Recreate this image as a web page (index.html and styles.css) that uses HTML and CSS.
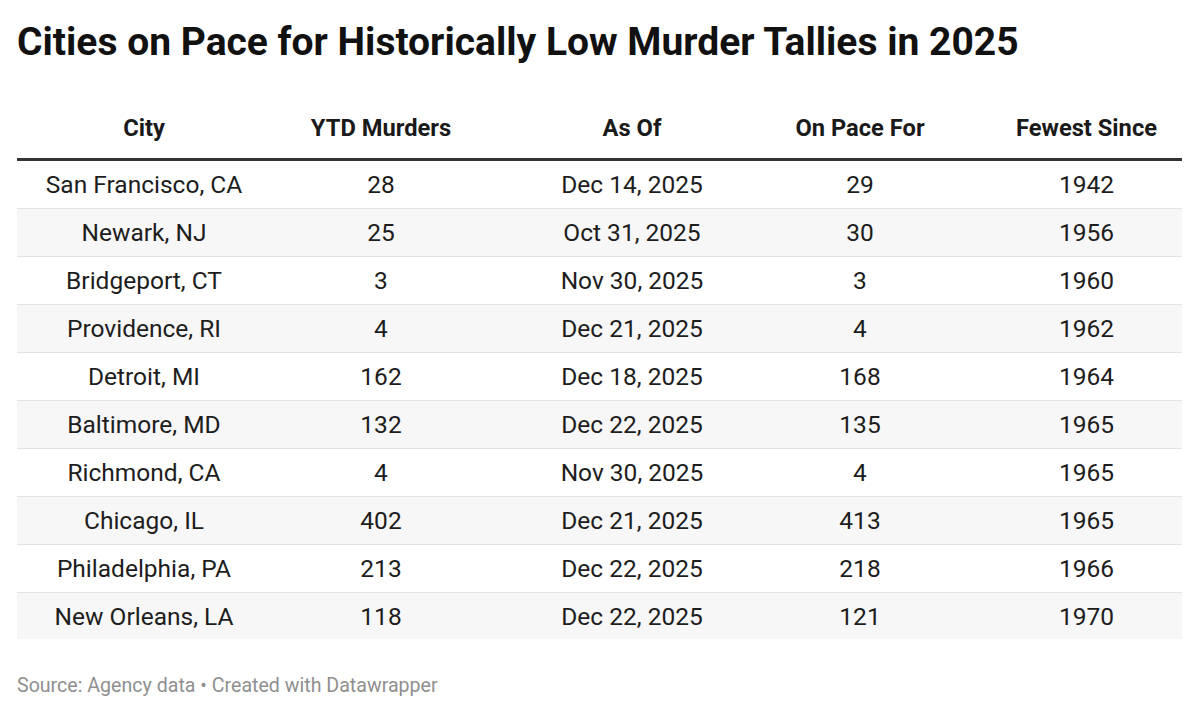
FILE: index.html
```html
<!DOCTYPE html>
<html>
<head>
<meta charset="utf-8">
<link rel="stylesheet" href="styles.css">
</head>
<body>
<div class="chart">
  <h1 class="title">Cities on Pace for Historically Low Murder Tallies in 2025</h1>
  <div class="table">
    <div class="row head">
      <div class="c c1">City</div><div class="c c2">YTD Murders</div><div class="c c3">As Of</div><div class="c c4">On Pace For</div><div class="c c5">Fewest Since</div>
    </div>
    <div class="row"><div class="c c1">San Francisco, CA</div><div class="c c2">28</div><div class="c c3">Dec 14, 2025</div><div class="c c4">29</div><div class="c c5">1942</div></div>
    <div class="row"><div class="c c1">Newark, NJ</div><div class="c c2">25</div><div class="c c3">Oct 31, 2025</div><div class="c c4">30</div><div class="c c5">1956</div></div>
    <div class="row"><div class="c c1">Bridgeport, CT</div><div class="c c2">3</div><div class="c c3">Nov 30, 2025</div><div class="c c4">3</div><div class="c c5">1960</div></div>
    <div class="row"><div class="c c1">Providence, RI</div><div class="c c2">4</div><div class="c c3">Dec 21, 2025</div><div class="c c4">4</div><div class="c c5">1962</div></div>
    <div class="row"><div class="c c1">Detroit, MI</div><div class="c c2">162</div><div class="c c3">Dec 18, 2025</div><div class="c c4">168</div><div class="c c5">1964</div></div>
    <div class="row"><div class="c c1">Baltimore, MD</div><div class="c c2">132</div><div class="c c3">Dec 22, 2025</div><div class="c c4">135</div><div class="c c5">1965</div></div>
    <div class="row"><div class="c c1">Richmond, CA</div><div class="c c2">4</div><div class="c c3">Nov 30, 2025</div><div class="c c4">4</div><div class="c c5">1965</div></div>
    <div class="row"><div class="c c1">Chicago, IL</div><div class="c c2">402</div><div class="c c3">Dec 21, 2025</div><div class="c c4">413</div><div class="c c5">1965</div></div>
    <div class="row"><div class="c c1">Philadelphia, PA</div><div class="c c2">213</div><div class="c c3">Dec 22, 2025</div><div class="c c4">218</div><div class="c c5">1966</div></div>
    <div class="row"><div class="c c1">New Orleans, LA</div><div class="c c2">118</div><div class="c c3">Dec 22, 2025</div><div class="c c4">121</div><div class="c c5">1970</div></div>
  </div>
  <div class="footer">Source: Agency data • Created with Datawrapper</div>
</div>
</body>
</html>
```
FILE: styles.css
```css
html, body {
  margin: 0;
  padding: 0;
  background: #ffffff;
}
body {
  font-family: Roboto, "Liberation Sans", sans-serif;
  color: #1d1d1d;
}
.chart {
  width: 1165px;
  padding: 0 18px 0 17px;
}
.title {
  margin: 0;
  padding-top: 19px;
  font-size: 39px;
  line-height: 46px;
  font-weight: 700;
  color: #111111;
}
.table {
  margin-top: 39px;
}
.row {
  display: grid;
  grid-template-columns: 254px 220px 282px 174px 235px;
  height: 47px;
  align-items: center;
  border-bottom: 1px solid #e3e3e3;
  font-size: 24.5px;
}
.row:nth-child(odd) {
  background: #f7f7f7;
}
.row.head {
  background: #ffffff;
  height: 48px;
  padding-bottom: 6px;
  border-bottom: 3px solid #333333;
  font-weight: 700;
  font-size: 23.7px;
  color: #1a1a1a;
}
.row:last-child {
  border-bottom: none;
  height: 46px;
}
.c {
  text-align: center;
}
.c5 {
  padding-left: 44px;
}
.footer {
  margin-top: 35px;
  font-size: 19.6px;
  line-height: 23px;
  color: #8f8f8f;
}
```
